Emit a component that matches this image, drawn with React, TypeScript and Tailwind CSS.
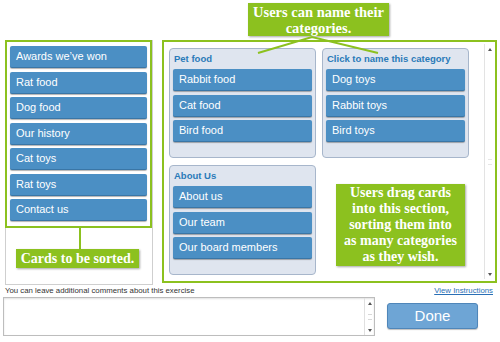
import React from 'react';

const GREEN = 'bg-[#8cc11f]';

const leftCards = ['Awards we\u2019ve won', 'Rat food', 'Dog food', 'Our history', 'Cat toys', 'Rat toys', 'Contact us'];

const categories = [
  { title: 'Pet food', cards: ['Rabbit food', 'Cat food', 'Bird food'] },
  { title: 'Click to name this category', cards: ['Dog toys', 'Rabbit toys', 'Bird toys'] },
  { title: 'About Us', cards: ['About us', 'Our team', 'Our board members'] },
];

const Card: React.FC<{ label: string }> = ({ label }) => (
  <div className="h-[22px] flex items-center pl-[6px] rounded-[2px] bg-[#4b8fc4] border-b border-[#3a76a6] shadow-[0_1px_1px_rgba(0,0,0,0.3)] text-white text-[11px] leading-none">
    {label}
  </div>
);

const Arrow: React.FC<{ up?: boolean }> = ({ up }) => (
  <div className="h-[10px] flex items-center justify-center">
    <div
      className={
        up
          ? 'w-0 h-0 border-x-[2px] border-x-transparent border-b-[3px] border-b-[#555]'
          : 'w-0 h-0 border-x-[2px] border-x-transparent border-t-[3px] border-t-[#555]'
      }
    />
  </div>
);

export default function App() {
  return (
    <div
      className="relative w-[500px] h-[342px] bg-white overflow-hidden text-[#333]"
      style={{ fontFamily: '"Liberation Sans", Arial, sans-serif' }}
    >
      <div className="flex pt-[40px] pl-[5px]">
        {/* Cards to be sorted */}
        <div className="w-[148px] h-[245px] border-x border-b border-[#cfcfcf] flex flex-col">
          <div className="-ml-px w-[147px] h-[188px] border-2 border-[#8cc11f] pt-[4px] pl-[3px] pr-[3px] flex flex-col gap-[3.5px]">
            {leftCards.map(c => (
              <Card key={c} label={c} />
            ))}
          </div>
          <div className={`ml-[73px] w-[2px] h-[21px] ${GREEN}`} />
          <div
            className={`ml-[10px] w-[123px] h-[19px] ${GREEN} shadow-[1px_1px_2px_rgba(0,0,0,0.35)] flex items-center justify-center text-white font-bold text-[14px]`}
            style={{ fontFamily: '"Liberation Serif", serif' }}
          >
            Cards to be sorted.
          </div>
        </div>

        {/* Sorting area */}
        <div className="ml-[9px] w-[335px] h-[243px] border-2 border-[#8cc11f] flex">
          <div className="flex-1 pl-[5px] pt-[6px] grid grid-cols-[147px_147px] gap-x-[6px] gap-y-[7px] content-start">
            {categories.map(cat => (
              <div key={cat.title} className="h-[110px] rounded-[4px] border border-[#a7b6cb] bg-[#dfe5ef] px-[3px] flex flex-col">
                <div className="h-[20px] flex items-center pl-px text-[#2a7ab8] font-bold text-[9.5px]">
                  {cat.title}
                </div>
                <div className="flex flex-col gap-[3.5px]">
                  {cat.cards.map(c => (
                    <Card key={c} label={c} />
                  ))}
                </div>
              </div>
            ))}
          </div>
          <div className="w-[10px] my-[2px] mr-[1px] border-l border-[#e3e3e3] flex flex-col justify-between">
            <Arrow up />
            <div className="mx-auto w-[4px] h-[6px] border-y border-[#e6e6e6]" />
            <Arrow />
          </div>
        </div>
      </div>

      {/* Comments */}
      <div className="flex justify-between items-center px-[5px] h-[12px] text-[7.8px]">
        <span className="text-[#333]">You can leave additional comments about this exercise</span>
        <span className="text-[#2a6fb5] underline mr-[2px]">View Instructions</span>
      </div>
      <div className="flex items-start">
        <div className="ml-[3px] w-[372px] h-[39px] border border-[#bdbdbd] bg-white shadow-[inset_0_1px_2px_rgba(0,0,0,0.12)] flex justify-end">
          <div className="w-[10px] border-l border-[#e0e0e0] flex flex-col justify-between">
            <Arrow up />
            <div className="mx-auto w-[4px] h-[6px] border-y border-[#d8d8d8]" />
            <Arrow />
          </div>
        </div>
        <div className="ml-[12px] mt-[6px] w-[91px] h-[26px] rounded-[3px] bg-[#6ea5d5] border border-[#4f86b9] shadow-[0_1px_1px_rgba(0,0,0,0.25)] flex items-center justify-center text-white text-[15px]">
          Done
        </div>
      </div>

      {/* Annotation: top callout */}
      <div
        className={`absolute left-[248px] top-[3px] w-[141px] h-[33px] ${GREEN} shadow-[1px_1px_2px_rgba(0,0,0,0.35)] flex flex-col items-center justify-center text-white font-bold text-[14.5px] leading-[16px]`}
        style={{ fontFamily: '"Liberation Serif", serif' }}
      >
        <span>Users can name their</span>
        <span>categories.</span>
      </div>
      <svg className="absolute left-0 top-0" width="500" height="342" viewBox="0 0 500 342">
        <polyline points="258,53 312,37 378,53" fill="none" stroke="#8cc11f" strokeWidth="2" />
      </svg>

      {/* Annotation: drag callout */}
      <div
        className={`absolute left-[336px] top-[184px] w-[129px] h-[82px] ${GREEN} shadow-[1px_1px_2px_rgba(0,0,0,0.35)] flex flex-col items-center justify-center text-white font-bold text-[14px] leading-[16px]`}
        style={{ fontFamily: '"Liberation Serif", serif' }}
      >
        <span>Users drag cards</span>
        <span>into this section,</span>
        <span>sorting them into</span>
        <span>as many categories</span>
        <span>as they wish.</span>
      </div>
    </div>
  );
}
